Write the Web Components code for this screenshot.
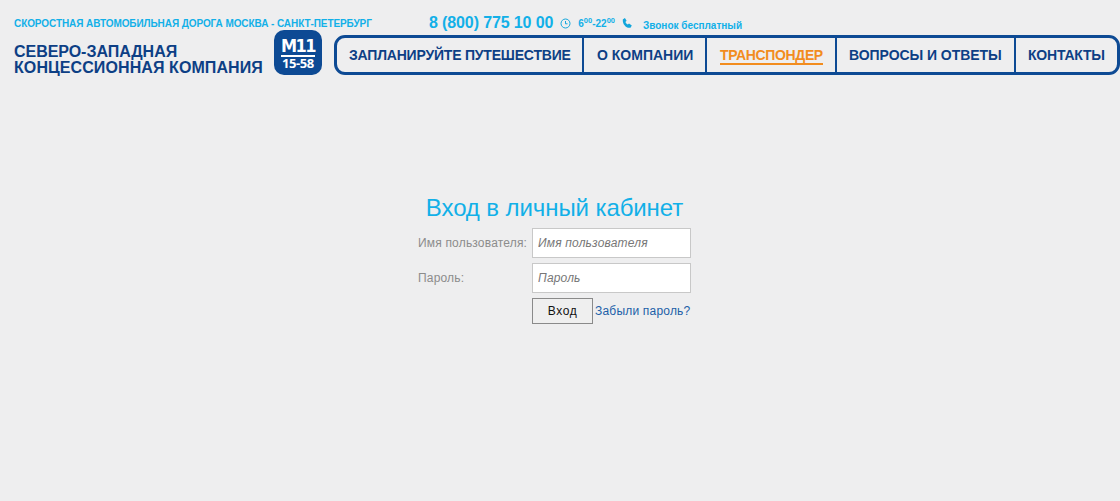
<!DOCTYPE html>
<html lang="ru">
<head>
<meta charset="utf-8">
<title>Вход в личный кабинет</title>
<style>
  html, body { margin: 0; padding: 0; background: #eeeeef; height: 100%; }
  body { font-family: "Liberation Sans", Arial, sans-serif; }
</style>
</head>
<body>
<site-page>
  <site-header slot="header"></site-header>
  <login-form slot="main"></login-form>
</site-page>

<script>
class SitePage extends HTMLElement {
  constructor() {
    super();
    this.attachShadow({ mode: "open" });
    this.shadowRoot.innerHTML = `
      <style>
        :host { display: flex; flex-direction: column; height: 501px; overflow: hidden; }
        .main { display: flex; justify-content: center; padding-top: 112px; }
      </style>
      <slot name="header"></slot>
      <div class="main"><slot name="main"></slot></div>
    `;
  }
}

class RoadLogo extends HTMLElement {
  constructor() {
    super();
    this.attachShadow({ mode: "open" });
    this.shadowRoot.innerHTML = `
      <style>
        :host {
          display: flex;
          flex-direction: column;
          align-items: center;
          width: 48px;
          height: 45px;
          box-sizing: border-box;
          padding-top: 6px;
          background: #0d4a94;
          border-radius: 10px;
          color: #fff;
          font-weight: 700;
        }
        .top { font-family: "DejaVu Sans", sans-serif; font-stretch: condensed; font-size: 18px; line-height: 19px; letter-spacing: -1.5px; border-bottom: 2px solid #fff; width: 34px; text-align: center; white-space: nowrap; }
        .bottom { font-family: "Open Sans", sans-serif; font-size: 13px; line-height: 13px; letter-spacing: -0.4px; }
      </style>
      <div class="top">M11</div>
      <div class="bottom">15-58</div>
    `;
  }
}

class NavItem extends HTMLElement {
  constructor() {
    super();
    this.attachShadow({ mode: "open" });
    this.shadowRoot.innerHTML = `
      <style>
        :host {
          display: flex;
          align-items: center;
          box-sizing: border-box;
          height: 100%;
          border-left: 2px solid #0d4a94;
          color: #0d3f85;
          font-size: 14px;
          font-weight: 700;
          white-space: nowrap;
        }
        :host(:first-child) { border-left: 0; }
        :host([active]) { color: #f28c1e; }
        span { display: block; line-height: 16px; }
        :host([active]) span { border-bottom: 2px solid #f28c1e; line-height: 15px; margin-top: 2px; }
      </style>
      <span><slot></slot></span>
    `;
  }
}

class MainNav extends HTMLElement {
  constructor() {
    super();
    this.attachShadow({ mode: "open" });
    this.shadowRoot.innerHTML = `
      <style>
        :host {
          display: flex;
          box-sizing: border-box;
          width: 786px;
          height: 40px;
          border: 3px solid #0d4a94;
          border-radius: 11px;
        }
      </style>
      <slot></slot>
    `;
  }
}

class SiteHeader extends HTMLElement {
  constructor() {
    super();
    this.attachShadow({ mode: "open" });
    this.shadowRoot.innerHTML = `
      <style>
        :host { display: flex; height: 82px; box-sizing: border-box; padding: 15px 0 0 14px; }
        .left { width: 320px; flex: none; }
        .road { font-size: 10px; letter-spacing: -0.08px; font-weight: 700; line-height: 15px; color: #12b0e8; white-space: nowrap; height: 15px; position: relative; top: 1px; }
        .company-row { display: flex; align-items: flex-start; gap: 11px; }
        .company { font-size: 16px; letter-spacing: 0.09px; font-weight: 700; line-height: 16px; color: #0d3f85; padding-top: 14px; white-space: nowrap; }
        .company span { letter-spacing: -0.04px; }
        .right { flex: none; }
        .contacts { display: flex; align-items: center; height: 20px; padding-left: 95px; color: #12b0e8; font-weight: 700; white-space: nowrap; position: relative; top: -2px; }
        .phone { font-size: 16px; line-height: 18px; letter-spacing: -0.12px; }
        .clock { margin-left: 7px; }
        .hours { font-size: 10px; margin-left: 7px; line-height: 16px; position: relative; top: 1px; }
        .hours sup { font-size: 7.5px; line-height: 0; vertical-align: 4px; }
        .tel { margin-left: 7px; }
        .free { font-size: 10px; margin-left: 10px; position: relative; top: 2px; }
      </style>
      <div class="left">
        <div class="road">СКОРОСТНАЯ АВТОМОБИЛЬНАЯ ДОРОГА МОСКВА - САНКТ-ПЕТЕРБУРГ</div>
        <div class="company-row">
          <div class="company"><span>СЕВЕРО-ЗАПАДНАЯ</span><br>КОНЦЕССИОННАЯ КОМПАНИЯ</div>
          <road-logo></road-logo>
        </div>
      </div>
      <div class="right">
        <div class="contacts">
          <span class="phone">8 (800) 775 10 00</span>
          <svg class="clock" width="11" height="11" viewBox="0 0 11 11" fill="none" stroke="#12a6dc" stroke-width="1"><circle cx="5.500" cy="5.500" r="4.500"/><path d="M5.500 3v2.800h2"/></svg>
          <span class="hours">6<sup>00</sup>-22<sup>00</sup></span>
          <svg class="tel" width="11" height="11" viewBox="0 0 11 11"><path fill="#12a6dc" d="M.800 1.500 2.900 0l1.700 2.800-1.200 1.100c.4 1.200 1.200 2.100 2.400 2.700l1.200-1.100 2.800 1.900-1.300 2.300C4.500 10.600.400 6.500.800 1.500z"/></svg>
          <span class="free">Звонок бесплатный</span>
        </div>
        <main-nav>
          <nav-item style="padding:0 12px;letter-spacing:-0.2px;width:245px">ЗАПЛАНИРУЙТЕ ПУТЕШЕСТВИЕ</nav-item>
          <nav-item style="padding:0 12px 0 13px;width:123px">О КОМПАНИИ</nav-item>
          <nav-item active style="padding:0 12px 0 13px;letter-spacing:-0.35px;width:130px">ТРАНСПОНДЕР</nav-item>
          <nav-item style="padding:0 12px;letter-spacing:-0.06px;width:179px">ВОПРОСЫ И ОТВЕТЫ</nav-item>
          <nav-item style="padding:0 12px;letter-spacing:-0.2px">КОНТАКТЫ</nav-item>
        </main-nav>
      </div>
    `;
  }
}

class LoginForm extends HTMLElement {
  constructor() {
    super();
    this.attachShadow({ mode: "open" });
    this.shadowRoot.innerHTML = `
      <style>
        :host { display: block; width: 273px; margin-right: 11px; font-family: "Liberation Sans", Arial, sans-serif; }
        h1 { margin: 0 0 6px; font-size: 24px; letter-spacing: -0.09px; font-weight: 400; line-height: 28px; color: #12b0e8; text-align: center; }
        .row { display: grid; grid-template-columns: 114px 159px; align-items: center; margin-top: 5px; }
        h1 + .row { margin-top: 0; }
        label { font-size: 12px; letter-spacing: 0.18px; color: #8c8c8c; white-space: nowrap; }
        input {
          box-sizing: border-box;
          width: 159px;
          height: 30px;
          padding: 0 5px;
          border: 1px solid #c8c8c8;
          background: #fff;
          font: italic 12px "Liberation Sans", Arial, sans-serif;
          letter-spacing: 0.18px;
          color: #333;
          outline: 0;
        }
        input::placeholder { color: #777; opacity: 1; }
        .actions { display: flex; align-items: center; gap: 2px; margin: 5px 0 0 114px; }
        button {
          box-sizing: border-box;
          width: 61px;
          height: 26px;
          padding: 0;
          border: 1px solid #8a8a8a;
          background: #efefef;
          font: 12px "Liberation Sans", Arial, sans-serif;
          letter-spacing: 0.6px;
          color: #111;
        }
        a { font-size: 12px; letter-spacing: 0.2px; color: #1c5fa8; text-decoration: none; white-space: nowrap; }
      </style>
      <h1>Вход в личный кабинет</h1>
      <div class="row"><label>Имя пользователя:</label><input placeholder="Имя пользователя"></div>
      <div class="row"><label>Пароль:</label><input type="password" placeholder="Пароль"></div>
      <div class="actions"><button>Вход</button><a href="#">Забыли пароль?</a></div>
    `;
  }
}

customElements.define("site-page", SitePage);
customElements.define("road-logo", RoadLogo);
customElements.define("nav-item", NavItem);
customElements.define("main-nav", MainNav);
customElements.define("site-header", SiteHeader);
customElements.define("login-form", LoginForm);
</script>
</body>
</html>
